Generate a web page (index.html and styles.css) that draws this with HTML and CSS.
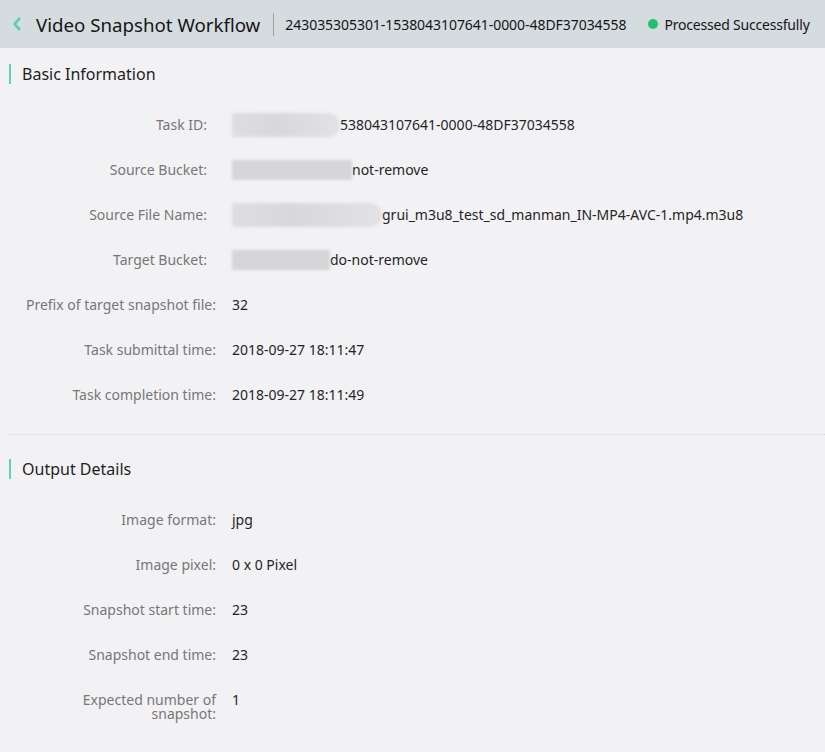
FILE: index.html
```html
<!DOCTYPE html>
<html>
<head>
<meta charset="utf-8">
<link rel="stylesheet" href="styles.css">
</head>
<body>
<header class="topbar">
  <svg class="back" width="10" height="16" viewBox="0 0 10 16"><path d="M8 2 L2.5 8 L8 14" fill="none" stroke="#5ccfae" stroke-width="2.6"/></svg>
  <h1 class="title">Video Snapshot Workflow</h1>
  <span class="sep"></span>
  <span class="task-id">243035305301-1538043107641-0000-48DF37034558</span>
  <span class="status"><span class="dot"></span>Processed Successfully</span>
</header>
<main class="content">
  <section class="section">
    <h2 class="sec-title">Basic Information</h2>
    <div class="rows">
      <div class="row"><div class="label label-short">Task ID:</div><div class="value"><span class="mask mask-a"></span>538043107641-0000-48DF37034558</div></div>
      <div class="row"><div class="label label-short">Source Bucket:</div><div class="value"><span class="mask mask-b"></span>not-remove</div></div>
      <div class="row"><div class="label label-short">Source File Name:</div><div class="value"><span class="mask mask-c"></span>grui_m3u8_test_sd_manman_IN-MP4-AVC-1.mp4.m3u8</div></div>
      <div class="row"><div class="label label-short">Target Bucket:</div><div class="value"><span class="mask mask-d"></span>do-not-remove</div></div>
      <div class="row"><div class="label">Prefix of target snapshot file:</div><div class="value">32</div></div>
      <div class="row"><div class="label">Task submittal time:</div><div class="value">2018-09-27 18:11:47</div></div>
      <div class="row"><div class="label">Task completion time:</div><div class="value">2018-09-27 18:11:49</div></div>
    </div>
  </section>
  <hr class="divider">
  <section class="section">
    <h2 class="sec-title">Output Details</h2>
    <div class="rows">
      <div class="row"><div class="label">Image format:</div><div class="value">jpg</div></div>
      <div class="row"><div class="label">Image pixel:</div><div class="value">0 x 0 Pixel</div></div>
      <div class="row"><div class="label">Snapshot start time:</div><div class="value">23</div></div>
      <div class="row"><div class="label">Snapshot end time:</div><div class="value">23</div></div>
      <div class="row"><div class="label label-wrap">Expected number of<br>snapshot:</div><div class="value">1</div></div>
    </div>
  </section>
</main>
</body>
</html>
```
FILE: styles.css
```css
* { box-sizing: border-box; }
html, body { margin: 0; padding: 0; }
body {
  background: #f2f2f4;
  font-family: "Noto Sans", "Open Sans", sans-serif;
  color: #252525;
  width: 825px;
  height: 752px;
  overflow: hidden;
}
.topbar {
  height: 48px;
  background: #d5dce0;
  display: flex;
  align-items: center;
  padding-left: 12px;
}
.back { display: block; margin-right: 14px; }
.title {
  margin: 0;
  font-size: 18.7px;
  font-weight: 400;
  color: #151515;
  white-space: nowrap;
}
.sep {
  width: 1px;
  height: 23px;
  background: #9aa0a4;
  margin: 0 11px 0 13px;
}
.task-id { font-size: 14px; color: #151515; white-space: nowrap; letter-spacing: -0.05px; }
.status {
  margin-left: 22px;
  font-size: 14px;
  color: #151515;
  display: flex;
  align-items: center;
  white-space: nowrap;
  letter-spacing: -0.2px;
}
.dot {
  width: 10px; height: 10px; border-radius: 50%;
  background: #1ec26a;
  margin-right: 6px;
}
.content { padding: 16px 0 0 9px; }
.sec-title {
  margin: 0;
  height: 20px;
  line-height: 20px;
  border-left: 2px solid #5ed3b2;
  padding-left: 11px;
  font-size: 16px;
  font-weight: 400;
  color: #1e1e1e;
}
.rows {
  display: flex;
  flex-direction: column;
  gap: 31px;
  margin-top: 34px;
}
.row { display: flex; align-items: flex-start; font-size: 14px; line-height: 14px; }
.label {
  width: 207px;
  text-align: right;
  color: #777;
  white-space: nowrap;
}
.label-short { padding-right: 9px; }
.label-wrap { line-height: 14px; }
.value {
  margin-left: 16px;
  color: #252525;
  white-space: nowrap;
  display: flex;
  align-items: center;
}
.mask {
  display: inline-block;
  height: 24px;
  margin: -5px 0;
  background: linear-gradient(90deg, #dedee1, #d8d8db 40%, #e2e2e5);
  filter: blur(1.5px);
}
.mask-a { width: 108px; border-radius: 0 12px 12px 0; }
.mask-b { width: 120px; height: 20px; background: #d6d6d9; }
.mask-c { width: 150px; border-radius: 0 14px 14px 0; }
.mask-d { width: 98px; height: 20px; background: #d6d6d9; }
.divider {
  margin: 32px 0 24px;
  border: 0;
  border-top: 1px dotted #c5dbe8;
  height: 0;
}
```
